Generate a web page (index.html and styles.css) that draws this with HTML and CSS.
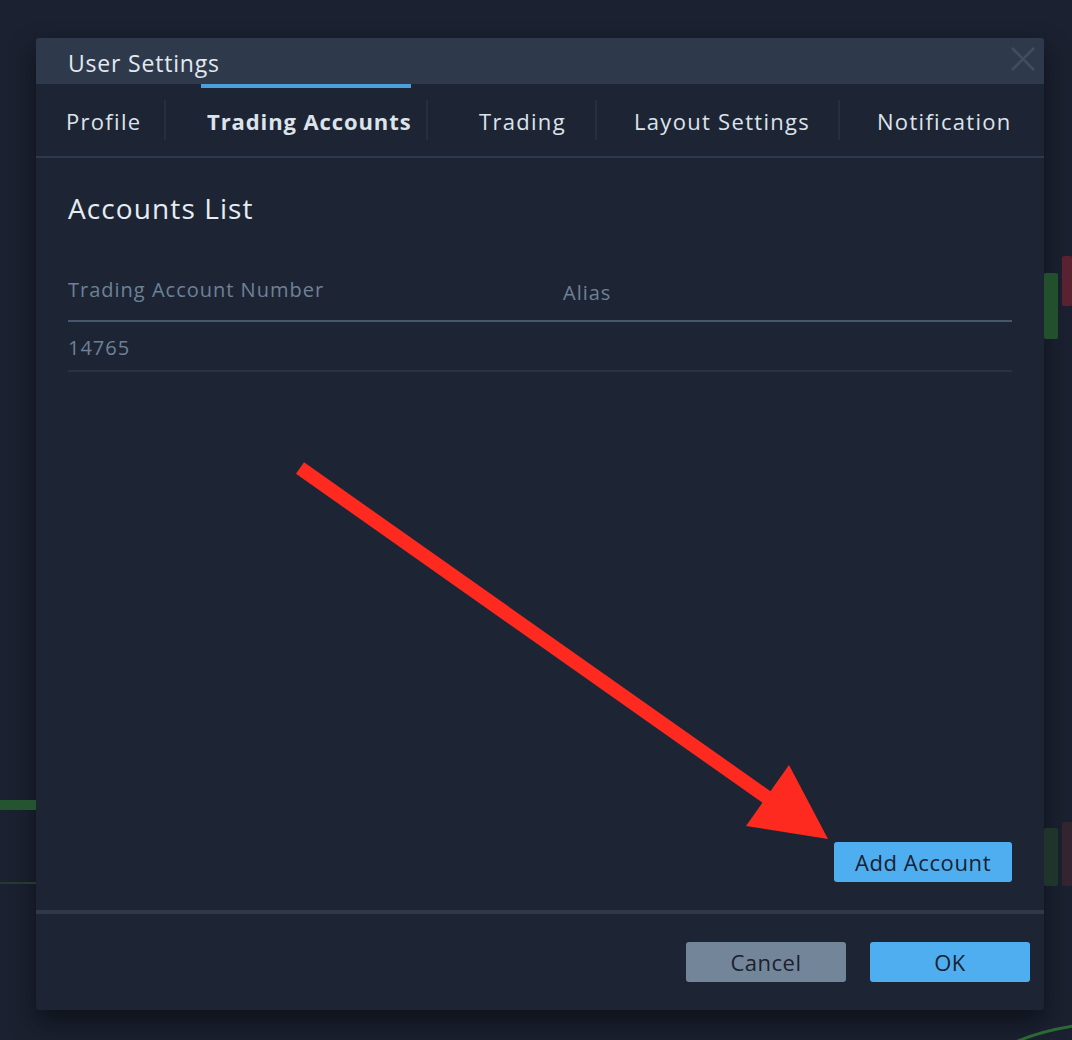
FILE: index.html
```html
<!DOCTYPE html>
<html>
<head>
<meta charset="utf-8">
<link rel="stylesheet" href="styles.css">
</head>
<body>
<div class="chart">
  <div class="candle c1"></div>
  <div class="candle c2"></div>
  <div class="candle c3"></div>
  <div class="candle c4"></div>
  <div class="hbar"></div>
  <div class="hline"></div>
  <svg class="curve" width="80" height="40" viewBox="0 0 80 40"><path d="M0 40 Q30 22 80 15" fill="none" stroke="#2c6a35" stroke-width="3"/></svg>
</div>
<div class="dialog">
  <div class="titlebar">
    <span class="title">User Settings</span>
    <svg class="close" width="24" height="24" viewBox="0 0 24 24"><path d="M1 1 L23 23 M23 1 L1 23" stroke="#3f4f62" stroke-width="2.6" fill="none"/></svg>
  </div>
  <div class="tabs">
    <div class="tab t1">Profile</div>
    <div class="sep"></div>
    <div class="tab t2 active">Trading Accounts</div>
    <div class="sep"></div>
    <div class="tab t3">Trading</div>
    <div class="sep"></div>
    <div class="tab t4">Layout Settings</div>
    <div class="sep"></div>
    <div class="tab t5">Notification</div>
  </div>
  <div class="body">
    <h2 class="heading">Accounts List</h2>
    <div class="table">
      <div class="row head">
        <div class="col c-num">Trading Account Number</div>
        <div class="col c-alias">Alias</div>
      </div>
      <div class="row item">
        <div class="col c-num">14765</div>
        <div class="col c-alias"></div>
      </div>
    </div>
    <button class="btn primary add">Add Account</button>
  </div>
  <div class="footer">
    <button class="btn secondary">Cancel</button>
    <button class="btn primary ok">OK</button>
  </div>
</div>
<svg class="arrow" width="1072" height="1040" viewBox="0 0 1072 1040">
  <line x1="300" y1="468" x2="775" y2="803" stroke="#ff2a1f" stroke-width="14"/>
  <polygon points="746,826 789,765 828,839" fill="#ff2a1f"/>
</svg>
</body>
</html>
```
FILE: styles.css
```css
* { box-sizing: border-box; }
html, body {
  margin: 0;
  padding: 0;
}
body {
  width: 1072px;
  height: 1040px;
  overflow: hidden;
  background: #1b2130;
  font-family: "Open Sans", "Noto Sans", sans-serif;
  position: relative;
  padding: 38px 0 0 36px;
}
.chart { position: absolute; inset: 0; }
.candle { position: absolute; border-radius: 2px; }
.c1 { left: 1044px; top: 273px; width: 14px; height: 66px; background: #22502c; }
.c2 { left: 1062px; top: 256px; width: 10px; height: 50px; background: #5a2230; }
.c3 { left: 1044px; top: 828px; width: 14px; height: 58px; background: #1f3529; }
.c4 { left: 1062px; top: 822px; width: 10px; height: 64px; background: #33242f; }
.hbar { position: absolute; left: 0; top: 800px; width: 36px; height: 10px; background: #255530; }
.hline { position: absolute; left: 0; top: 882px; width: 36px; height: 2px; background: #243a2c; }
.curve { position: absolute; left: 1000px; top: 1010px; }

.dialog {
  width: 1008px;
  height: 972px;
  background: #1d2535;
  display: flex;
  flex-direction: column;
  box-shadow: 0 12px 24px rgba(8, 12, 18, 0.7);
  border-radius: 3px;
}
.titlebar {
  height: 46px;
  background: #2e3a4c;
  border-radius: 3px 3px 0 0;
  display: flex;
  align-items: center;
  justify-content: space-between;
  padding: 0 9px 0 32px;
}
.title {
  color: #e3e9ef;
  font-size: 23px;
  letter-spacing: 0.8px;
  padding-top: 4px;
}
.close { margin-top: -4px; }

.tabs {
  height: 74px;
  display: flex;
  align-items: center;
  border-bottom: 2px solid #2e3a4c;
}
.tab {
  height: 72px;
  display: flex;
  align-items: center;
  color: #dde3ea;
  font-size: 22px;
  letter-spacing: 1.3px;
  position: relative;
  padding-top: 2px;
  white-space: nowrap;
}
.t1 { width: 128px; padding-left: 30px; }
.t2 { width: 260px; padding-left: 41px; font-weight: 700; letter-spacing: 0.9px; }
.t3 { width: 167px; padding-left: 51px; }
.t4 { width: 241px; padding-left: 37px; }
.t5 { flex: 1; padding-left: 37px; }
.active::before {
  content: "";
  position: absolute;
  left: 35px;
  top: 0;
  width: 210px;
  height: 4px;
  background: #4aa0da;
}
.sep {
  width: 2px;
  height: 40px;
  background: #262f3f;
}

.body {
  flex: 1;
  display: flex;
  flex-direction: column;
  padding: 30px 32px 28px 32px;
}
.heading {
  margin: 0;
  font-weight: 400;
  font-size: 28px;
  letter-spacing: 1.1px;
  line-height: 40px;
  color: #e6ecf2;
}
.table { margin-top: 48px; }
.row {
  display: flex;
}
.head {
  height: 46px;
  border-bottom: 2px solid #46586c;
  align-items: flex-start;
}
.item {
  height: 50px;
  border-bottom: 2px solid #283344;
  align-items: center;
}
.col {
  color: #6d8196;
  font-size: 20px;
  letter-spacing: 1px;
  line-height: 28px;
}
.c-num { width: 495px; }
.head .c-alias { padding-top: 3px; }
.item .c-num { margin-top: 3px; }

.btn {
  font-family: inherit;
  border: none;
  border-radius: 3px;
  font-size: 22px;
  color: #1a2130;
  height: 40px;
  padding: 0;
  cursor: pointer;
  letter-spacing: 0.5px;
}
.primary { background: #4faef0; }
.secondary { background: #738598; }
.add {
  margin-top: auto;
  align-self: flex-end;
  width: 178px;
  letter-spacing: 0.6px;
}
.footer {
  border-top: 4px solid #2e3a4c;
  padding: 28px 14px 28px 0;
  display: flex;
  justify-content: flex-end;
  gap: 24px;
}
.footer .btn { width: 160px; }

.arrow {
  position: absolute;
  left: 0;
  top: 0;
  pointer-events: none;
}
```
